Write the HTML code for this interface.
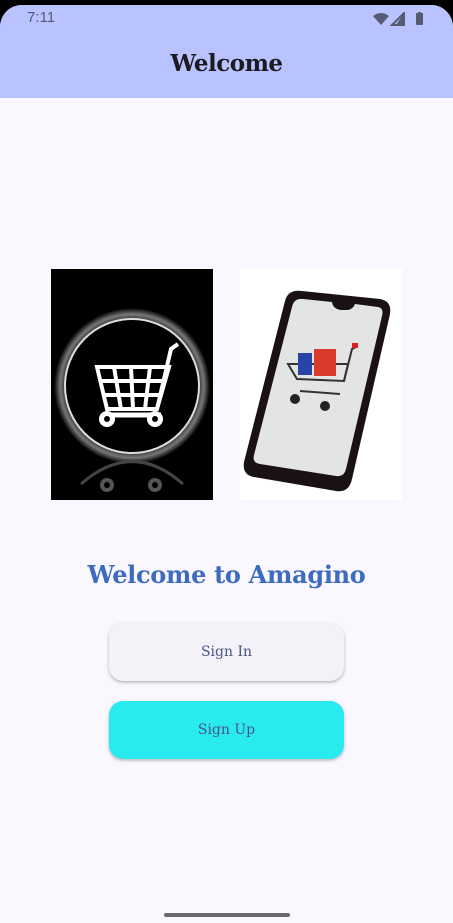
<!DOCTYPE html>
<html><head><meta charset="utf-8"><style>
*{margin:0;padding:0;box-sizing:border-box}
html,body{width:453px;height:923px;overflow:hidden;background:#000}
.scr{position:absolute;left:0;top:5px;width:453px;height:918px;background:#faf7fe;border-radius:22px 22px 0 0;overflow:hidden}
.hdr{position:absolute;left:0;top:0;width:453px;height:93px;background:#b8c3ff}
.time{position:absolute;left:27px;top:4px;font:15px "Liberation Sans",sans-serif;color:#555a70}
.title{position:absolute;left:0;width:453px;top:45px;text-align:center;font:bold 23px "DejaVu Serif",serif;color:#1c1b22;letter-spacing:-0.5px}
.img1{position:absolute;left:51px;top:264px;width:162px;height:231px;background:#000}
.img2{position:absolute;left:240px;top:264px;width:162px;height:231px;background:#fff}
.wt{position:absolute;left:0;width:453px;top:555px;text-align:center;font:bold 24px "DejaVu Serif",serif;color:#3d6bbf;letter-spacing:-0.3px}
.btn{position:absolute;left:109px;width:235px;height:58px;border-radius:14px;text-align:center;font:14px "DejaVu Serif",serif;line-height:58px;color:#4a5488;box-shadow:0 1.5px 3px rgba(0,0,0,.28)}
.bar{position:absolute;left:164px;top:908px;width:126px;height:4px;border-radius:2px;background:#6b6b6e}
</style></head><body>
<div class="scr">
<div class="hdr">
<div class="time">7:11</div>
<svg style="position:absolute;left:373px;top:7px" width="52" height="14" viewBox="0 0 52 14">
<path d="M0 4 Q8 -2 16 4 L8 13 Z" fill="#555a70"/>
<path d="M31 1 L31 13 L19 13 Z" fill="none" stroke="#555a70" stroke-width="2"/>
<path d="M31 1 L31 13 L23 13 Z" fill="#555a70"/>
<rect x="43" y="1" width="7" height="12" rx="1" fill="#555a70"/><rect x="45" y="0" width="3" height="2" fill="#555a70"/>
</svg>
<div class="title">Welcome</div>
</div>
<div class="img1">
<svg width="162" height="231" viewBox="0 0 162 231">
<defs><radialGradient id="g" cx="50%" cy="50%" r="50%"><stop offset="80%" stop-color="#000"/><stop offset="92%" stop-color="#777"/><stop offset="100%" stop-color="#000"/></radialGradient></defs>
<circle cx="81" cy="117" r="78" fill="url(#g)"/>
<circle cx="81" cy="117" r="67" fill="#000" stroke="#ddd" stroke-width="2"/>
<path d="M46 98 L56 140 L106 140 L118 98 Z M50 112 L114 112 M53 126 L110 126 M63 98 L70 140 M80 98 L82 140 M99 98 L94 140" fill="none" stroke="#fff" stroke-width="4"/>
<path d="M106 140 L120 80 L127 75" fill="none" stroke="#fff" stroke-width="4"/>
<path d="M54 146 L110 146" stroke="#fff" stroke-width="5"/>
<circle cx="56" cy="150" r="8" fill="#fff"/><circle cx="56" cy="150" r="3" fill="#000"/>
<circle cx="104" cy="150" r="8" fill="#fff"/><circle cx="104" cy="150" r="3" fill="#000"/>
<path d="M30 215 Q81 170 132 215" fill="none" stroke="#444" stroke-width="3"/>
<circle cx="56" cy="216" r="7" fill="#555"/><circle cx="56" cy="216" r="3" fill="#000"/>
<circle cx="104" cy="216" r="7" fill="#555"/><circle cx="104" cy="216" r="3" fill="#000"/>
</svg></div>
<div class="img2">
<svg width="162" height="231" viewBox="0 0 162 231">
<path d="M62 22 L140 30 Q152 32 150 45 L112 210 Q109 224 96 222 L14 208 Q2 206 4 193 L45 32 Q48 20 62 22 Z" fill="#1a1212"/>
<path d="M63 30 L92 33 Q93 40 101 41 L108 41 Q113 40 115 35 L138 38 Q144 39 142 47 L106 200 Q104 208 96 207 L20 195 Q12 194 14 186 L52 38 Q54 29 63 30 Z" fill="#e3e4e4"/>
<path d="M48 95 L108 95 L104 112 L57 110 Z" fill="none" stroke="#333" stroke-width="2"/>
<rect x="58" y="84" width="14" height="22" fill="#2944a8"/>
<rect x="74" y="80" width="22" height="27" fill="#d83a2c"/>
<path d="M104 112 L112 80 L116 78" fill="none" stroke="#333" stroke-width="2"/><rect x="112" y="74" width="6" height="5" fill="#e02020"/>
<path d="M60 122 L100 125" stroke="#333" stroke-width="2"/>
<circle cx="55" cy="130" r="5" fill="#222"/><circle cx="85" cy="137" r="5" fill="#222"/>
</svg></div>
<div class="wt">Welcome to Amagino</div>
<div class="btn" style="top:618px;background:#f4f2f8">Sign In</div>
<div class="btn" style="top:696px;background:#29ebef">Sign Up</div>
<div class="bar"></div>
</div>
</body></html>
